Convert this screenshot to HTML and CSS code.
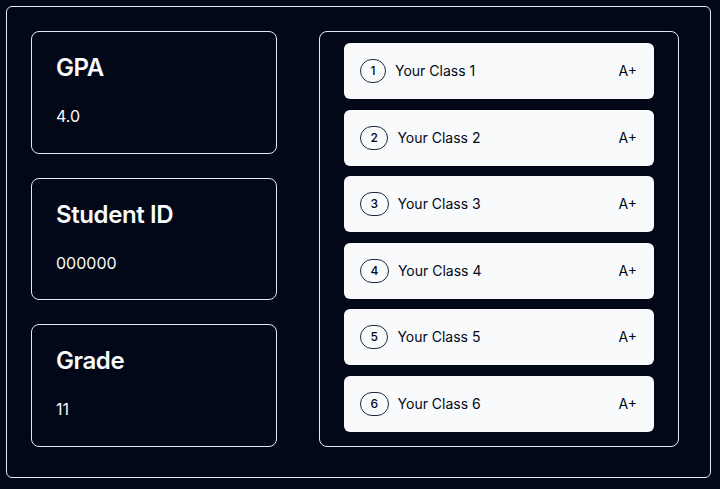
FILE: index.html
```html
<!DOCTYPE html>
<html lang="en">
<head>
<meta charset="utf-8">
<title>Student Dashboard</title>
<link rel="stylesheet" href="styles.css">
</head>
<body>
<main class="shell">
  <section class="stats">
    <div class="card">
      <h2 class="card-title">GPA</h2>
      <p class="card-value">4.0</p>
    </div>
    <div class="card">
      <h2 class="card-title">Student ID</h2>
      <p class="card-value">000000</p>
    </div>
    <div class="card">
      <h2 class="card-title">Grade</h2>
      <p class="card-value">11</p>
    </div>
  </section>
  <section class="classes">
    <div class="class-row"><span class="badge">1</span><span class="class-name">Your Class 1</span><span class="grade">A+</span></div>
    <div class="class-row"><span class="badge">2</span><span class="class-name">Your Class 2</span><span class="grade">A+</span></div>
    <div class="class-row"><span class="badge">3</span><span class="class-name">Your Class 3</span><span class="grade">A+</span></div>
    <div class="class-row"><span class="badge">4</span><span class="class-name">Your Class 4</span><span class="grade">A+</span></div>
    <div class="class-row"><span class="badge">5</span><span class="class-name">Your Class 5</span><span class="grade">A+</span></div>
    <div class="class-row"><span class="badge">6</span><span class="class-name">Your Class 6</span><span class="grade">A+</span></div>
  </section>
</main>
</body>
</html>
```
FILE: styles.css
```css
* { box-sizing: border-box; }
html, body {
  margin: 0;
  padding: 0;
  background: #020817;
  font-family: Inter, "Noto Sans", sans-serif;
  color: #f8fafc;
}
.shell {
  margin: 6px;
  width: 705px;
  height: 472px;
  border: 1px solid #e2e8f0;
  border-radius: 6px;
  padding: 24px 30px 30px 24px;
  display: flex;
  gap: 42px;
}
.stats {
  width: 246px;
  display: flex;
  flex-direction: column;
  gap: 24px;
}
.card {
  flex: 1;
  border: 1px solid #e2e8f0;
  border-radius: 8px;
  padding: 24px;
}
.card-title {
  margin: 0;
  font-size: 24px;
  line-height: 1;
  font-weight: 600;
  letter-spacing: -0.4px;
}
.card-value {
  margin: 24px 0 0;
  font-size: 16px;
  line-height: 24px;
}
.classes {
  width: 360px;
  border: 1px solid #e2e8f0;
  border-radius: 8px;
  padding: 11px 24px 0;
  display: flex;
  flex-direction: column;
  gap: 10.6px;
}
.class-row {
  height: 56px;
  background: #f8fafc;
  border-radius: 6px;
  padding: 0 17px 0 16px;
  display: flex;
  align-items: center;
  color: #020817;
}
.badge {
  height: 24px;
  border: 1px solid #1e293b;
  border-radius: 999px;
  padding: 0 9.5px;
  font-size: 12px;
  font-weight: 500;
  line-height: 22px;
}
.class-name {
  margin-left: 9px;
  flex: 1;
  font-size: 14px;
  line-height: 20px;
}
.grade {
  font-size: 14px;
  font-weight: 400;
  line-height: 20px;
}
```
